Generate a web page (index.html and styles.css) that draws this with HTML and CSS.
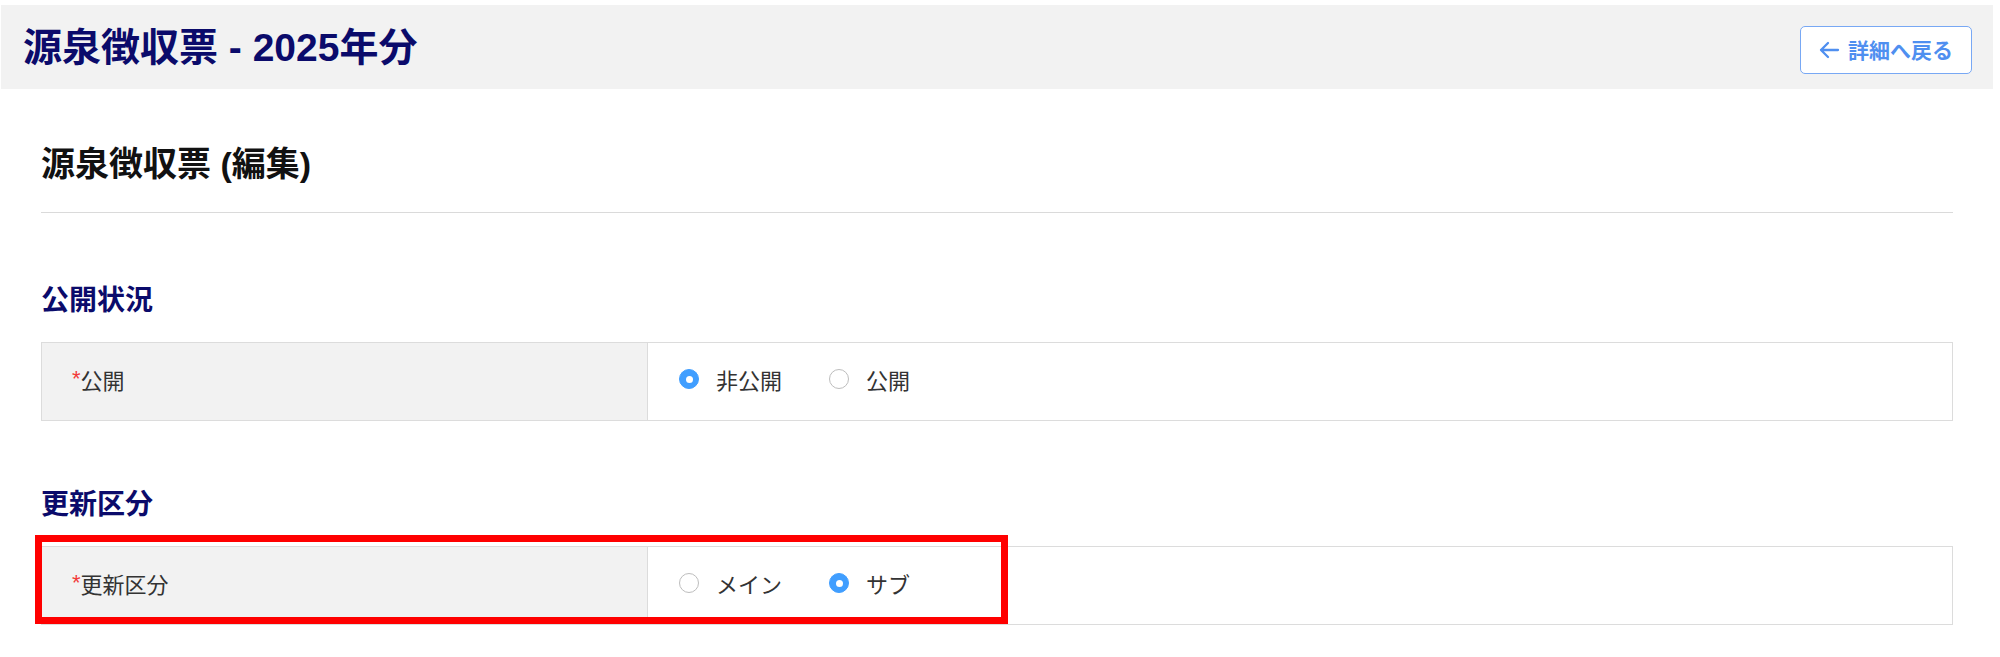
FILE: index.html
```html
<!DOCTYPE html>
<html lang="ja">
<head>
<meta charset="utf-8">
<title>源泉徴収票 - 2025年分</title>
<link rel="stylesheet" href="styles.css">
</head>
<body>
<header class="page-header">
  <h1 class="page-title">源泉徴収票 - 2025年分</h1>
  <button class="back-btn" type="button">
    <svg class="back-icon" viewBox="0 0 22 22" width="22" height="22" aria-hidden="true">
      <path d="M20 11H3M10 4L3 11l7 7" fill="none" stroke="currentColor" stroke-width="2.3" stroke-linecap="round" stroke-linejoin="round"/>
    </svg>
    <span>詳細へ戻る</span>
  </button>
</header>

<main class="content">
  <h2 class="form-title">源泉徴収票 (編集)</h2>

  <section class="section">
    <h3 class="section-title">公開状況</h3>
    <div class="form-row">
      <div class="form-label"><span class="req">*</span>公開</div>
      <div class="form-field">
        <label class="radio is-checked"><span class="radio-dot"></span><span class="radio-text">非公開</span></label>
        <label class="radio"><span class="radio-dot"></span><span class="radio-text">公開</span></label>
      </div>
    </div>
  </section>

  <section class="section">
    <h3 class="section-title">更新区分</h3>
    <div class="form-row">
      <div class="form-label"><span class="req">*</span>更新区分</div>
      <div class="form-field">
        <label class="radio"><span class="radio-dot"></span><span class="radio-text">メイン</span></label>
        <label class="radio is-checked"><span class="radio-dot"></span><span class="radio-text">サブ</span></label>
      </div>
      <div class="highlight-box"></div>
    </div>
  </section>
</main>
</body>
</html>
```

FILE: styles.css
```css
* {
  box-sizing: border-box;
}

html, body {
  margin: 0;
  padding: 0;
  background: #ffffff;
}

body {
  font-family: "Liberation Sans", "Noto Sans CJK JP", sans-serif;
  color: #333333;
  width: 2000px;
  height: 657px;
  overflow: hidden;
}

/* Header */
.page-header {
  display: flex;
  align-items: center;
  justify-content: space-between;
  height: 84px;
  margin: 5px 7px 0 1px;
  padding: 0 21px 0 22px;
  background: #f2f2f2;
}

.page-title {
  margin: 0;
  font-size: 39px;
  line-height: 39px;
  font-weight: 700;
  color: #0b0b6b;
}

.back-btn {
  display: flex;
  align-items: center;
  gap: 8px;
  height: 48px;
  margin-top: 6px;
  padding: 0 18px 0 17px;
  border: 1px solid #78a8f4;
  border-radius: 5px;
  background: #ffffff;
  color: #4f8ff0;
  font-family: "Liberation Sans", "Noto Sans CJK JP", sans-serif;
  font-size: 21px;
  font-weight: 700;
  line-height: 21px;
  cursor: pointer;
}

.back-icon {
  display: block;
  flex: none;
}

/* Content */
.content {
  padding: 0 47px 0 41px;
}

.form-title {
  margin: 58px 0 0 0;
  padding-bottom: 31px;
  border-bottom: 1px solid #dadada;
  font-size: 34px;
  line-height: 34px;
  font-weight: 700;
  color: #111111;
}

.section {
  margin-top: 70px;
}

.section:first-of-type {
  margin-top: 74px;
}

.section-title {
  margin: 0 0 27px 0;
  font-size: 28px;
  line-height: 28px;
  font-weight: 700;
  color: #0b0b6b;
}

.form-row {
  position: relative;
  display: grid;
  grid-template-columns: 606px 1fr;
  height: 79px;
  border: 1px solid #dcdcdc;
}

.form-label {
  display: flex;
  align-items: center;
  padding-left: 30px;
  padding-bottom: 5px;
  background: #f2f2f2;
  border-right: 1px solid #dcdcdc;
  font-size: 22px;
  color: #333333;
}

.req {
  color: #f23a3a;
}

.form-field {
  display: flex;
  align-items: center;
  padding-left: 31px;
  padding-bottom: 5px;
}

.radio {
  display: flex;
  align-items: center;
  margin-right: 47px;
  font-size: 22px;
  color: #333333;
  cursor: pointer;
}

.radio-dot {
  position: relative;
  width: 20px;
  height: 20px;
  margin-right: 17px;
  border: 1.5px solid #bdbdbd;
  border-radius: 50%;
  background: #ffffff;
  flex: none;
}

.radio.is-checked .radio-dot {
  border-color: #409eff;
  background: #409eff;
}

.radio.is-checked .radio-dot::after {
  content: "";
  position: absolute;
  left: 50%;
  top: 50%;
  width: 7px;
  height: 7px;
  margin: -3.5px 0 0 -3.5px;
  border-radius: 50%;
  background: #ffffff;
}

/* Annotation overlay */
.highlight-box {
  position: absolute;
  top: -12px;
  left: -7px;
  width: 973px;
  height: 89px;
  border: 7px solid #ff0000;
  pointer-events: none;
}
```
